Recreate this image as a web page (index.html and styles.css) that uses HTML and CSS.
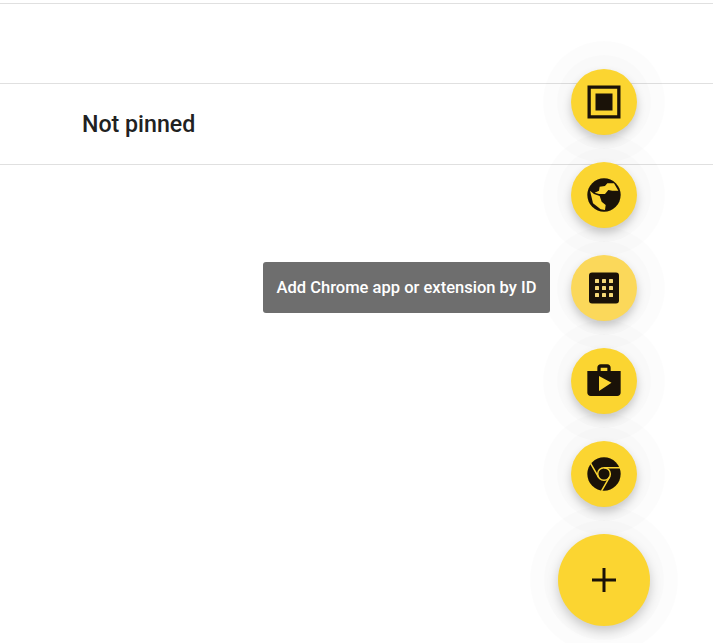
FILE: index.html
```html
<!DOCTYPE html>
<html lang="en">
<head>
<meta charset="utf-8">
<title>Pinned apps</title>
<link rel="stylesheet" href="styles.css">
</head>
<body>
<main class="page">
  <div class="spacer"></div>
  <div class="empty-row"></div>
  <div class="section-row"><h2 class="section-title">Not pinned</h2></div>
</main>
<div class="fab-stack">
  <button class="fab" aria-label="Add window">
    <svg class="icon" viewBox="0 0 40 40"><path fill="#1a1208" fill-rule="evenodd" d="M3.5 3.5h33v33h-33zM6.8 6.8v26.4h26.4V6.8z"/><rect x="11.5" y="11.5" width="17" height="17" fill="#1a1208"/></svg>
  </button>
  <button class="fab" aria-label="Add website">
    <svg class="icon-wide" viewBox="0 0 150 150"><circle cx="75" cy="75" r="50" fill="#1a1208"/><path class="cut" d="M47 68l13-6 2-12 16-2 7-8h20l13 22h-18l-12-2-10 12H60z"/><path class="cut" d="M33 62l12 10 17 6 6 17 12 10-2 15-13-2-23-18z"/></svg>
  </button>
  <button class="fab fab-hover" aria-label="Add Chrome app or extension by ID">
    <span class="tooltip">Add Chrome app or extension by ID</span>
    <svg class="icon" viewBox="0 0 40 40"><rect x="5" y="4.5" width="30" height="31" rx="3" fill="#1a1208"/><g fill="#f5d877"><rect x="11" y="11" width="4" height="4" rx=".6"/><rect x="18" y="11" width="4" height="4" rx=".6"/><rect x="25" y="11" width="4" height="4" rx=".6"/><rect x="11" y="18" width="4" height="4" rx=".6"/><rect x="18" y="18" width="4" height="4" rx=".6"/><rect x="25" y="18" width="4" height="4" rx=".6"/><rect x="11" y="25" width="4" height="4" rx=".6"/><rect x="18" y="25" width="4" height="4" rx=".6"/><rect x="25" y="25" width="4" height="4" rx=".6"/></g></svg>
  </button>
  <button class="fab" aria-label="Add Play Store app">
    <svg class="icon" viewBox="0 0 24 24"><path fill="#1a1208" d="M16 6V4c0-1.11-.89-2-2-2h-4c-1.11 0-2 .89-2 2v2H2v13c0 1.11.89 2 2 2h16c1.11 0 2-.89 2-2V6h-6zm-6-2h4v2h-4V4zM9 18V9l7.5 4L9 18z"/></svg>
  </button>
  <button class="fab" aria-label="Add from Chrome Web Store">
    <svg class="icon" viewBox="0 0 24 24"><circle cx="12" cy="12" r="10" fill="#1a1208"/><g class="chrome-lines"><circle cx="12" cy="12" r="3.8"/><path d="M12 8.2h10M8.71 13.9 3.96 5.67M15.29 13.9l-4.75 8.23"/></g></svg>
  </button>
  <button class="fab fab-main" aria-label="Add">
    <svg class="icon-plus" viewBox="0 0 24 24"><path fill="#1a1208" d="M10.5 0h3v10.5H24v3H13.5V24h-3V13.5H0v-3h10.5z"/></svg>
  </button>
</div>
</body>
</html>
```
FILE: styles.css
```css
* { box-sizing: border-box; }
html, body { margin: 0; height: 100%; overflow: hidden; background: #fff; }
body { position: relative; font-family: Roboto, "Liberation Sans", sans-serif; }
.spacer { height: 3px; }
.empty-row { height: 80px; border-top: 1px solid #e0e0e0; }
.section-row {
  height: 82px;
  display: flex;
  align-items: center;
  padding-left: 82px;
  border-top: 1px solid #e0e0e0;
  border-bottom: 1px solid #e0e0e0;
}
.section-title { margin: 0; font-size: 23.2px; font-weight: 500; color: #212121; }
.fab-stack {
  position: absolute;
  top: 69px;
  left: 558px;
  width: 92px;
  display: flex;
  flex-direction: column;
  align-items: center;
  gap: 27px;
}
.fab {
  position: relative;
  width: 66px;
  height: 66px;
  padding: 0;
  border: 0;
  border-radius: 50%;
  background: #fbd531;
  display: flex;
  align-items: center;
  justify-content: center;
  box-shadow: 0 5px 10px rgba(0,0,0,.2), 0 0 0 14px rgba(0,0,0,.01), 0 0 0 28px rgba(0,0,0,.01);
}
.fab-hover { background: #fbd85a; }
.fab-main {
  width: 92px;
  height: 92px;
  box-shadow: 0 5px 12px rgba(0,0,0,.2), 0 0 0 14px rgba(0,0,0,.01), 0 0 0 28px rgba(0,0,0,.01);
}
.icon { width: 40px; height: 40px; display: block; }
.icon-wide { width: 50px; height: 50px; display: block; }
.icon-plus { width: 24px; height: 24px; display: block; }
.cut { fill: #fbd531; }
.chrome-lines { fill: none; stroke: #fbd531; stroke-width: .9; }
.tooltip {
  position: absolute;
  right: 87px;
  top: 7px;
  width: 287px;
  height: 51px;
  display: flex;
  align-items: center;
  justify-content: center;
  background: #6e6e6e;
  border-radius: 3px;
  color: #fff;
  font: 500 16.55px Roboto, "Liberation Sans", sans-serif;
  white-space: nowrap;
}
```
